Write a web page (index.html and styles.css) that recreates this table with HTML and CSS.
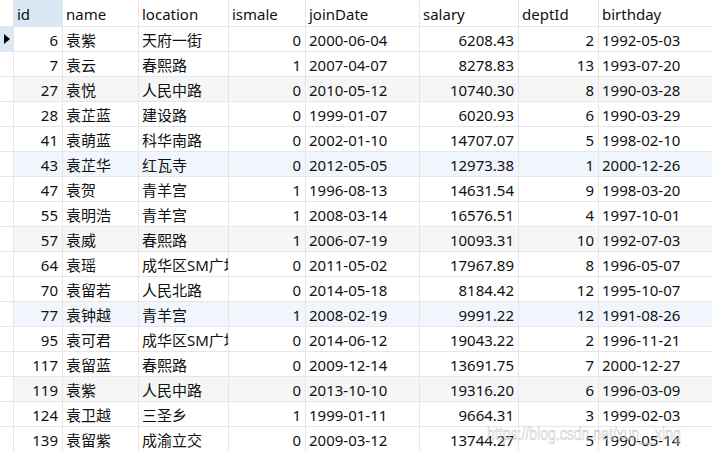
FILE: index.html
```html
<!DOCTYPE html>
<html lang="zh">
<head>
<meta charset="utf-8">
<title>employee</title>
<link rel="stylesheet" href="styles.css">
</head>
<body>
<div class="grid">
  <div class="row head">
    <div class="c ind"></div>
    <div class="c sel">id</div>
    <div class="c">name</div>
    <div class="c">location</div>
    <div class="c">ismale</div>
    <div class="c">joinDate</div>
    <div class="c">salary</div>
    <div class="c">deptId</div>
    <div class="c">birthday</div>
  </div>
  <div class="row"><div class="c ind cur"><span class="tri"></span></div><div class="c r">6</div><div class="c">袁紫</div><div class="c">天府一街</div><div class="c r">0</div><div class="c">2000-06-04</div><div class="c r">6208.43</div><div class="c r">2</div><div class="c">1992-05-03</div></div>
  <div class="row"><div class="c ind"></div><div class="c r">7</div><div class="c">袁云</div><div class="c">春熙路</div><div class="c r">1</div><div class="c">2007-04-07</div><div class="c r">8278.83</div><div class="c r">13</div><div class="c">1993-07-20</div></div>
  <div class="row gray"><div class="c ind"></div><div class="c r">27</div><div class="c">袁悦</div><div class="c">人民中路</div><div class="c r">0</div><div class="c">2010-05-12</div><div class="c r">10740.30</div><div class="c r">8</div><div class="c">1990-03-28</div></div>
  <div class="row"><div class="c ind"></div><div class="c r">28</div><div class="c">袁芷蓝</div><div class="c">建设路</div><div class="c r">0</div><div class="c">1999-01-07</div><div class="c r">6020.93</div><div class="c r">6</div><div class="c">1990-03-29</div></div>
  <div class="row"><div class="c ind"></div><div class="c r">41</div><div class="c">袁萌蓝</div><div class="c">科华南路</div><div class="c r">0</div><div class="c">2002-01-10</div><div class="c r">14707.07</div><div class="c r">5</div><div class="c">1998-02-10</div></div>
  <div class="row blue"><div class="c ind"></div><div class="c r">43</div><div class="c">袁芷华</div><div class="c">红瓦寺</div><div class="c r">0</div><div class="c">2012-05-05</div><div class="c r">12973.38</div><div class="c r">1</div><div class="c">2000-12-26</div></div>
  <div class="row"><div class="c ind"></div><div class="c r">47</div><div class="c">袁贺</div><div class="c">青羊宫</div><div class="c r">1</div><div class="c">1996-08-13</div><div class="c r">14631.54</div><div class="c r">9</div><div class="c">1998-03-20</div></div>
  <div class="row"><div class="c ind"></div><div class="c r">55</div><div class="c">袁明浩</div><div class="c">青羊宫</div><div class="c r">1</div><div class="c">2008-03-14</div><div class="c r">16576.51</div><div class="c r">4</div><div class="c">1997-10-01</div></div>
  <div class="row gray"><div class="c ind"></div><div class="c r">57</div><div class="c">袁威</div><div class="c">春熙路</div><div class="c r">1</div><div class="c">2006-07-19</div><div class="c r">10093.31</div><div class="c r">10</div><div class="c">1992-07-03</div></div>
  <div class="row"><div class="c ind"></div><div class="c r">64</div><div class="c">袁瑶</div><div class="c">成华区SM广场</div><div class="c r">0</div><div class="c">2011-05-02</div><div class="c r">17967.89</div><div class="c r">8</div><div class="c">1996-05-07</div></div>
  <div class="row"><div class="c ind"></div><div class="c r">70</div><div class="c">袁留若</div><div class="c">人民北路</div><div class="c r">0</div><div class="c">2014-05-18</div><div class="c r">8184.42</div><div class="c r">12</div><div class="c">1995-10-07</div></div>
  <div class="row blue"><div class="c ind"></div><div class="c r">77</div><div class="c">袁钟越</div><div class="c">青羊宫</div><div class="c r">1</div><div class="c">2008-02-19</div><div class="c r">9991.22</div><div class="c r">12</div><div class="c">1991-08-26</div></div>
  <div class="row"><div class="c ind"></div><div class="c r">95</div><div class="c">袁可君</div><div class="c">成华区SM广场</div><div class="c r">0</div><div class="c">2014-06-12</div><div class="c r">19043.22</div><div class="c r">2</div><div class="c">1996-11-21</div></div>
  <div class="row"><div class="c ind"></div><div class="c r">117</div><div class="c">袁留蓝</div><div class="c">春熙路</div><div class="c r">0</div><div class="c">2009-12-14</div><div class="c r">13691.75</div><div class="c r">7</div><div class="c">2000-12-27</div></div>
  <div class="row gray"><div class="c ind"></div><div class="c r">119</div><div class="c">袁紫</div><div class="c">人民中路</div><div class="c r">0</div><div class="c">2013-10-10</div><div class="c r">19316.20</div><div class="c r">6</div><div class="c">1996-03-09</div></div>
  <div class="row"><div class="c ind"></div><div class="c r">124</div><div class="c">袁卫越</div><div class="c">三圣乡</div><div class="c r">1</div><div class="c">1999-01-11</div><div class="c r">9664.31</div><div class="c r">3</div><div class="c">1999-02-03</div></div>
  <div class="row"><div class="c ind"></div><div class="c r">139</div><div class="c">袁留紫</div><div class="c">成渝立交</div><div class="c r">0</div><div class="c">2009-03-12</div><div class="c r">13744.27</div><div class="c r">5</div><div class="c">1990-05-14</div></div>
</div>
<div class="watermark">https://blog.csdn.net/xun__xing</div>
</body>
</html>
```
FILE: styles.css
```css
html, body {
  margin: 0;
  padding: 0;
  background: #fff;
  overflow: hidden;
}
body {
  position: relative;
  width: 712px;
  height: 452px;
  font-family: "Noto Sans", "Noto Sans CJK SC", sans-serif;
  font-size: 15px;
  color: #111;
}
.grid {
  display: flex;
  flex-direction: column;
  gap: 1px;
  background: #e6e6e6;
  width: 712px;
}
.row {
  display: grid;
  grid-template-columns: 13px 48px 75px 89px 76px 113px 98px 79px 1fr;
  column-gap: 1px;
  height: 24px;
}
.row.head {
  height: 26px;
}
.c {
  background: #fff;
  padding: 0 3px;
  line-height: 26px;
  white-space: nowrap;
  overflow: hidden;
}
.head .c {
  line-height: 28px;
}
.c.r {
  text-align: right;
  padding-right: 4px;
}
.c.ind {
  padding: 0;
  position: relative;
}
.c.sel,
.c.cur {
  background: #dae8f6;
}
.gray .c:not(.ind) {
  background: #f6f6f6;
}
.blue .c:not(.ind) {
  background: #f1f6fc;
}
.tri {
  position: absolute;
  left: 4px;
  top: 7px;
  width: 0;
  height: 0;
  border-top: 5px solid transparent;
  border-bottom: 5px solid transparent;
  border-left: 6px solid #000;
}
.watermark {
  position: absolute;
  left: 487px;
  top: 423px;
  font-family: "Liberation Sans", sans-serif;
  font-size: 19px;
  color: rgba(235, 235, 235, 0.55);
  -webkit-text-stroke: 0.6px rgba(140, 140, 140, 0.45);
  white-space: nowrap;
  transform: scaleX(0.74);
  transform-origin: left top;
}
```
